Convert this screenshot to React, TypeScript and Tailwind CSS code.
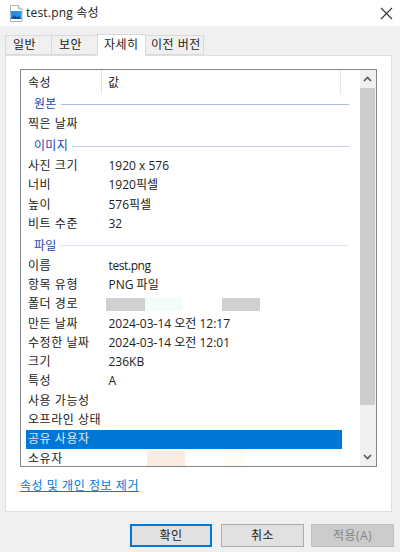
const font = { fontFamily: '"Open Sans", "Noto Sans CJK KR", sans-serif' };

function Tab({ label, active, className }: { label: string; active?: boolean; className: string }) {
  return (
    <div
      className={
        "flex items-center border border-[#d9d9d9] tracking-[0.5px] " +
        (active ? "h-[22px] -mb-px z-10 bg-white border-b-white" : "h-[20px] bg-[#f0f0f0] -ml-px") +
        " " +
        className
      }
    >
      {label}
    </div>
  );
}

function Row({ name, value, selected, valueClass }: { name: string; value?: string; selected?: boolean; valueClass?: string }) {
  return (
    <div className={"flex h-[19.3px] items-center " + (selected ? "bg-[#0078d7] text-[#e8e8e8]" : "text-[#222]")}>
      <span className="w-[82.5px] pl-[2px] whitespace-nowrap tracking-[0.55px]">{name}</span>
      {value && <span className={"whitespace-nowrap " + (valueClass ?? "")}>{value}</span>}
    </div>
  );
}

function Group({ label, className, lineClass }: { label: string; className?: string; lineClass: string }) {
  return (
    <div className={"-mr-[7px] flex h-[20px] items-center gap-[4px] pl-[8px] text-[#1c3fb0] tracking-[0.3px] " + (className ?? "")}>
      <span className="whitespace-nowrap">{label}</span>
      <div className={"h-px flex-1 " + lineClass} />
    </div>
  );
}

function Btn({ label, className }: { label: string; className: string }) {
  return <div className={"flex h-[23px] items-center justify-center tracking-[0.5px] " + className}>{label}</div>;
}

export default function App() {
  return (
    <div className="flex h-[552px] w-[400px] flex-col overflow-hidden bg-[#f0f0f0] text-[12px] text-[#222]" style={font}>
      <div className="flex h-[26px] items-center justify-between bg-white pl-[8px] pr-[7px]">
        <div className="flex items-center gap-[2px]">
          <svg width="16" height="17" viewBox="0 0 16 17">
            <path d="M2.5.5h8l3.5 3.5v12.5H2.5z" fill="#fff" stroke="#a9b4c0" />
            <path d="M10.5.5V4H14" fill="#e8eef4" stroke="#a9b4c0" />
            <rect x="3" y="6" width="10.5" height="8" fill="#2a8fdc" />
            <path d="M3 14l3.5-4 2.5 2.5 1.5-1.5 3 3z" fill="#0d4f96" />
          </svg>
          <span className="tracking-[0.2px]">test.png 속성</span>
        </div>
        <svg width="13" height="13" viewBox="0 0 13 13" stroke="#333" strokeWidth="1.1">
          <path d="M1 1l11 11M12 1L1 12" />
        </svg>
      </div>

      <div className="flex items-end pt-[8px] pl-[6px]">
        <Tab label="일반" className="w-[47px] pl-[7px]" />
        <Tab label="보안" className="w-[47px] pl-[7px]" />
        <Tab label="자세히" active className="w-[49px] -ml-px pl-[6px]" />
        <Tab label="이전 버전" className="w-[59px] pl-[5px]" />
      </div>

      <div className="ml-[5px] flex h-[457px] w-[387px] flex-col border border-[#dfdfdf] bg-white pt-[13px] pl-[14px]">
        <div className="flex h-[398px] w-[357px] overflow-hidden border border-[#82878f] bg-white">
          <div className="flex-1 pl-[5px] pr-[18px]">
            <div className="flex h-[24px] items-center tracking-[0.55px]">
              <span className="h-full w-[76px] border-r border-[#e5e5e5] pl-[2px] leading-[25px]">속성</span>
              <span className="h-full w-[239px] border-r border-[#e5e5e5] pl-[6px] leading-[25px]">값</span>
            </div>
            <Group label="원본" lineClass="bg-[#aeb9de]" />
            <Row name="찍은 날짜" />
            <Group label="이미지" className="mt-[3px]" lineClass="bg-[#c3cceb]" />
            <Row name="사진 크기" value="1920 x 576" />
            <Row name="너비" value="1920픽셀" />
            <Row name="높이" value="576픽셀" />
            <Row name="비트 수준" value="32" />
            <Group label="파일" className="mt-[2.5px]" lineClass="bg-[#dde3f3]" />
            <Row name="이름" value="test.png" valueClass="tracking-[-0.4px]" />
            <Row name="항목 유형" value="PNG 파일" />
            <div className="flex h-[19.3px] items-center">
              <span className="w-[80px] pl-[2px] tracking-[0.55px]">폴더 경로</span>
              <span className="h-[13px] w-[39px] bg-[#d0d0d0]" />
              <span className="h-[13px] w-[38px] bg-[#f3fdf7]" />
              <span className="ml-[39px] h-[13px] w-[38px] bg-[#d0d0d0]" />
            </div>
            <Row name="만든 날짜" value="2024-03-14 오전 12:17" />
            <Row name="수정한 날짜" value="2024-03-14 오전 12:01" />
            <Row name="크기" value="236KB" />
            <Row name="특성" value="A" />
            <Row name="사용 가능성" />
            <Row name="오프라인 상태" />
            <Row name="공유 사용자" selected />
            <div className="flex h-[19.3px] items-center">
              <span className="w-[121px] pl-[2px] tracking-[0.55px]">소유자</span>
              <span className="h-[15px] w-[38px] bg-[#faebe0]" />
              <span className="ml-[39px] h-[15px] w-[21px] bg-[#fffdf3]" />
            </div>
          </div>
          <div className="flex w-[16px] flex-col items-center bg-[#f0f0f0] pr-[1px]">
            <div className="flex h-[18px] items-center justify-center">
              <svg width="9" height="6" viewBox="0 0 9 6" fill="none" stroke="#555" strokeWidth="1.6">
                <path d="M1 5l3.5-3.5L8 5" />
              </svg>
            </div>
            <div className="h-[317px] w-full bg-[#cdcdcd]" />
            <div className="flex-1" />
            <div className="flex h-[18px] items-center justify-center">
              <svg width="9" height="6" viewBox="0 0 9 6" fill="none" stroke="#555" strokeWidth="1.6">
                <path d="M1 1l3.5 3.5L8 1" />
              </svg>
            </div>
          </div>
        </div>
        <div className="mt-[10px] tracking-[0.55px] text-[#0078d7] underline">속성 및 개인 정보 제거</div>
      </div>

      <div className="flex justify-end pt-[12px] pr-[6px]">
        <Btn label="확인" className="w-[82px] border-2 border-[#0078d7] bg-[#e1e1e1]" />
        <Btn label="취소" className="ml-[9px] w-[83px] border border-[#adadad] bg-[#e1e1e1]" />
        <Btn label="적용(A)" className="ml-[7px] w-[83px] border border-[#bfbfbf] bg-[#cccccc] text-[#838383]" />
      </div>
    </div>
  );
}
